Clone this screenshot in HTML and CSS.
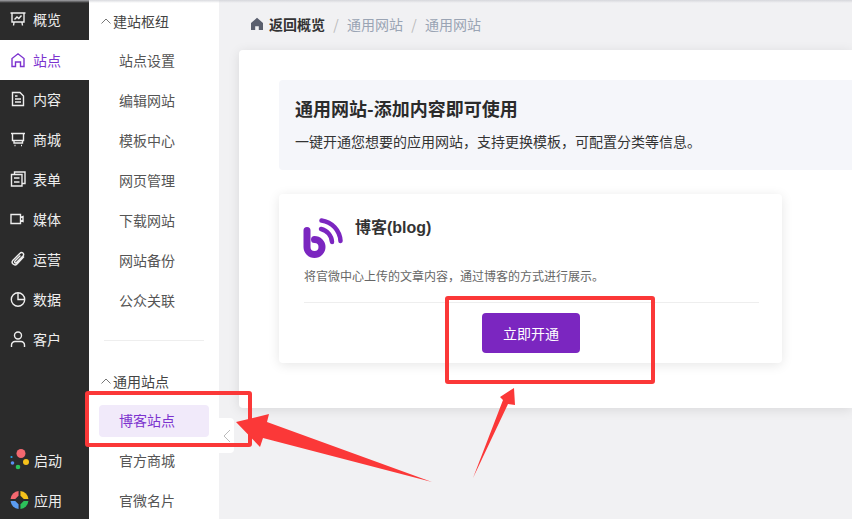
FILE: index.html
```html
<!DOCTYPE html>
<html lang="zh">
<head>
<meta charset="utf-8">
<title>通用网站</title>
<link rel="stylesheet" href="styles.css">
</head>
<body>
<div class="app">
  <nav class="rail">
    <a class="rail-item"><svg class="ri" viewBox="0 0 16 16"><path d="M.5 2h15M2 2v9h12V2M4 11.500l-.5 3M12 11.500l.5 3M4.500 8.500l2.500-2.500 1.800 1.500 2.700-3"/></svg>概览</a>
    <a class="rail-item active"><svg class="ri" viewBox="0 0 16 16"><path d="M2 14.500V6.500L8 1.800l6 4.700v8h-3.500V10h-5v4.500z"/></svg>站点</a>
    <a class="rail-item"><svg class="ri" viewBox="0 0 16 16"><path d="M2.500 1.500h7.500l3.500 3.500v9.500h-11zM5 8h6M5 11h6M5 5h2.500"/></svg>内容</a>
    <a class="rail-item"><svg class="ri" viewBox="0 0 16 16"><path d="M1 2.500h14M2.500 2.500v7h11v-7M4 9.500v2.500h8.500v-2.500M4.500 14.500h1M11 14.500h1"/></svg>商城</a>
    <a class="rail-item"><svg class="ri" viewBox="0 0 16 16"><path d="M4.500 3.500V1h10.500v11.500h-2.500M1.500 3.500h10.500v11.500h-10.500zM4 7h5.500M4 11h5.500"/></svg>表单</a>
    <a class="rail-item"><svg class="ri" viewBox="0 0 16 16"><path d="M1 3.500h9.500v9h-9.500zM10.500 6.500l2.500-1v5l-2.500-1"/></svg>媒体</a>
    <a class="rail-item"><svg class="ri" viewBox="0 0 16 16"><path d="M14 5.500L7 13a2.700 2.700 0 0 1-4-3.800l7-7a2 2 0 0 1 3 2.800l-6.500 6.500a1 1 0 0 1-1.600-1.400l5.500-5.600"/></svg>运营</a>
    <a class="rail-item"><svg class="ri" viewBox="0 0 16 16"><circle cx="8" cy="8.500" r="6.700"/><path d="M8 1.800v6.700h6.700"/></svg>数据</a>
    <a class="rail-item"><svg class="ri" viewBox="0 0 16 16"><circle cx="8" cy="4.500" r="3.500"/><path d="M1.500 16v-2a3.500 3.500 0 0 1 3.500-3.500h6a3.500 3.500 0 0 1 3.500 3.500v2"/></svg>客户</a>
    <div class="rail-foot">
      <a class="rail-item colored">
        <svg class="rc" viewBox="0 0 19 20"><circle cx="11" cy="3.500" r="4.500" fill="#f4686f"/><circle cx="16" cy="12" r="3" fill="#f5c21b"/><circle cx="8" cy="17" r="2.300" fill="#2cc25b"/><circle cx="2.500" cy="13" r="1.800" fill="#5b8ff0"/><circle cx="1.500" cy="7" r="1.100" fill="#2aa5e8"/></svg>启动</a>
      <a class="rail-item colored">
        <svg class="rc" viewBox="0 0 20 20"><path d="M9 .5A9.500 9.500 0 0 0 .6 9H5.500L9 5.500z" fill="#f4686f"/><path d="M11 .5A9.500 9.500 0 0 1 19.400 9H14.500L11 5.500z" fill="#f5c21b"/><path d="M.6 11A9.500 9.500 0 0 0 9 19.500V14.500L5.500 11z" fill="#5b9cf0"/><path d="M19.400 11A9.500 9.500 0 0 1 11 19.500V14.500L14.500 11z" fill="#2cc25b"/></svg>应用</a>
    </div>
  </nav>

  <aside class="subnav">
    <div class="group-title"><svg class="chev" viewBox="0 0 10 6"><path d="M.5 5.500L5 1l4.500 4.500"/></svg>建站枢纽</div>
    <ul class="sub-list">
      <li>站点设置</li>
      <li>编辑网站</li>
      <li>模板中心</li>
      <li>网页管理</li>
      <li>下载网站</li>
      <li>网站备份</li>
      <li>公众关联</li>
    </ul>
    <hr class="sub-rule">
    <div class="group-title"><svg class="chev" viewBox="0 0 10 6"><path d="M.5 5.500L5 1l4.500 4.500"/></svg>通用站点</div>
    <ul class="sub-list">
      <li class="current">博客站点</li>
      <li>官方商城</li>
      <li>官微名片</li>
    </ul>
  </aside>

  <main class="main">
    <div class="crumbs">
      <svg class="home" viewBox="0 0 14 14"><path d="M7 .8L13 6v7H8.800V9.200H5.200V13H1V6z"/></svg>
      <b>返回概览</b><i>/</i><span>通用网站</span><i>/</i><span>通用网站</span>
    </div>
    <section class="panel">
      <div class="banner">
        <h1>通用网站-添加内容即可使用</h1>
        <p>一键开通您想要的应用网站，支持更换模板，可配置分类等信息。</p>
      </div>
      <article class="card">
        <div class="card-head">
          <svg class="blog" viewBox="0 0 42 42"><g fill="none" stroke="#7b26c0" stroke-linecap="round"><path d="M4 12.500V29A7.500 7.500 0 1 0 11.500 21.500" stroke-width="7"/><path d="M18 11A14 14 0 0 1 29 24" stroke-width="4.500"/><path d="M18.500 2.500A22 22 0 0 1 37.500 23" stroke-width="4.500"/></g></svg>
          <h2>博客(blog)</h2>
        </div>
        <p class="card-desc">将官微中心上传的文章内容，通过博客的方式进行展示。</p>
        <div class="card-action"><button class="open">立即开通</button></div>
      </article>
    </section>
  </main>
</div>

<div class="topline"></div>
<div class="collapse"><svg viewBox="0 0 8 14"><path d="M7 1L1 7l6 6"/></svg></div>
<div class="mark mark-left"></div>
<div class="mark mark-right"></div>
<svg class="arrows" viewBox="0 0 852 519">
  <polygon points="236,422 269,414 267,422 432,482 263,438 260,447"/>
  <polygon points="473,478 503,400 500,397 514,388 515,405 508,404"/>
</svg>
</body>
</html>
```

FILE: styles.css
```css
* { box-sizing: border-box; }
html, body { margin: 0; height: 100%; overflow: hidden; }
body { font-family: "Noto Sans CJK SC", "Liberation Sans", sans-serif; font-size: 14px; color: #333; background: #f1f1f3; }
.app { display: flex; height: 519px; }

.rail { width: 89px; flex: none; background: #2b2b2b; display: flex; flex-direction: column; }
.rail-item { height: 40px; flex: none; display: flex; align-items: center; gap: 7px; padding: 0 0 2px 10px; color: #eee; font-size: 14px; }
.rail-item.active { background: #fff; color: #7c33cf; padding-bottom: 0; }
.ri { width: 16px; height: 16px; fill: none; stroke: currentColor; stroke-width: 1.400; }
.rail-foot { margin: auto 0 0; }
.rail-item.colored { padding: 2px 0 0 10px; gap: 5px; }
.rc { width: 19px; height: 20px; overflow: visible; }

.subnav { width: 130px; flex: none; background: #fff; padding: 0 10px; display: flex; flex-direction: column; }
.group-title { height: 40px; flex: none; display: flex; align-items: center; padding: 2px 0 0 2px; color: #444; gap: 2px; }
.chev { width: 10px; height: 6px; fill: none; stroke: #777; stroke-width: 1; }
.sub-list { list-style: none; margin: 0; padding: 0; }
.sub-list li { height: 40px; margin: 0; padding-left: 20px; line-height: 40px; color: #555; border-radius: 4px; }
.sub-list .current { height: 32px; line-height: 30px; margin: 6px 0 3px; background: #f1eafa; color: #7c33cf; }
.sub-rule { width: 100px; margin: 20px 0 0 5px; border: 0; border-top: 1px solid #eee; height: 1px; flex: none; }
.sub-rule + .group-title { margin-top: 18px; padding-top: 4px; }

.main { flex: 1; min-width: 0; padding-left: 20px; display: flex; flex-direction: column; }
.crumbs { height: 50px; flex: none; display: flex; align-items: center; padding: 0 0 2px 11px; font-size: 14px; color: #9aa4b4; }
.crumbs b { color: #333; font-weight: 700; margin-left: 5px; }
.crumbs i { font-style: normal; width: 22px; text-align: center; color: #bbb; }
.home { width: 14px; height: 14px; fill: #5a5f6e; }
.panel { height: 358px; flex: none; background: #fff; border-radius: 4px 0 0 4px; padding: 30px 0 0 40px; box-shadow: 0 2px 12px rgba(0,0,0,.1); }
.banner { height: 90px; background: #f5f6fa; border-radius: 4px 0 0 4px; padding: 15px 16px 0; }
.banner h1 { margin: 0; font-size: 18px; font-weight: 700; line-height: 26px; color: #2b2b2b; }
.banner p { margin: 10px 0 0; font-size: 14px; line-height: 20px; color: #333; }
.card { width: 503px; height: 169px; margin-top: 24px; background: #fff; border-radius: 4px; padding: 0 23px 0 25px; box-shadow: 0 2px 12px rgba(0,0,0,.1); }
.card-head { display: flex; height: 70px; padding-top: 24px; }
.blog { width: 42px; height: 42px; margin-left: -1px; }
.card-head h2 { margin: 0 0 0 10px; font-size: 16px; font-weight: 700; line-height: 20px; color: #333; font-family: "Liberation Sans", "Noto Sans CJK SC", sans-serif; }
.card-desc { margin: 0; height: 39px; border-bottom: 1px solid #eee; font-size: 12px; line-height: 24px; color: #666; }
.card-action { display: flex; justify-content: center; padding: 10px 1px 0 0; }
.open { width: 98px; height: 40px; border: 0; border-radius: 4px; background: #7b26c0; color: #fff; font: 14px "Noto Sans CJK SC", sans-serif; padding: 0; }

.topline { position: absolute; left: 0; top: 0; width: 100%; height: 3px; background: linear-gradient(rgba(205,206,212,.75), rgba(205,206,212,0)); }
.collapse { position: absolute; left: 219px; top: 418px; width: 15px; height: 35px; background: #fff; border-radius: 0 4px 4px 0; display: flex; align-items: center; justify-content: center; }
.collapse svg { width: 8px; height: 14px; fill: none; stroke: #bbb; stroke-width: 1; }
.mark { position: absolute; border: 4px solid #fb3838; border-radius: 3px; }
.mark-left { left: 85px; top: 391px; width: 167px; height: 56px; }
.mark-right { left: 445px; top: 296px; width: 210px; height: 88px; }
.arrows { position: absolute; left: 0; top: 0; width: 852px; height: 519px; pointer-events: none; }
.arrows polygon { fill: #fb3838; }
```
